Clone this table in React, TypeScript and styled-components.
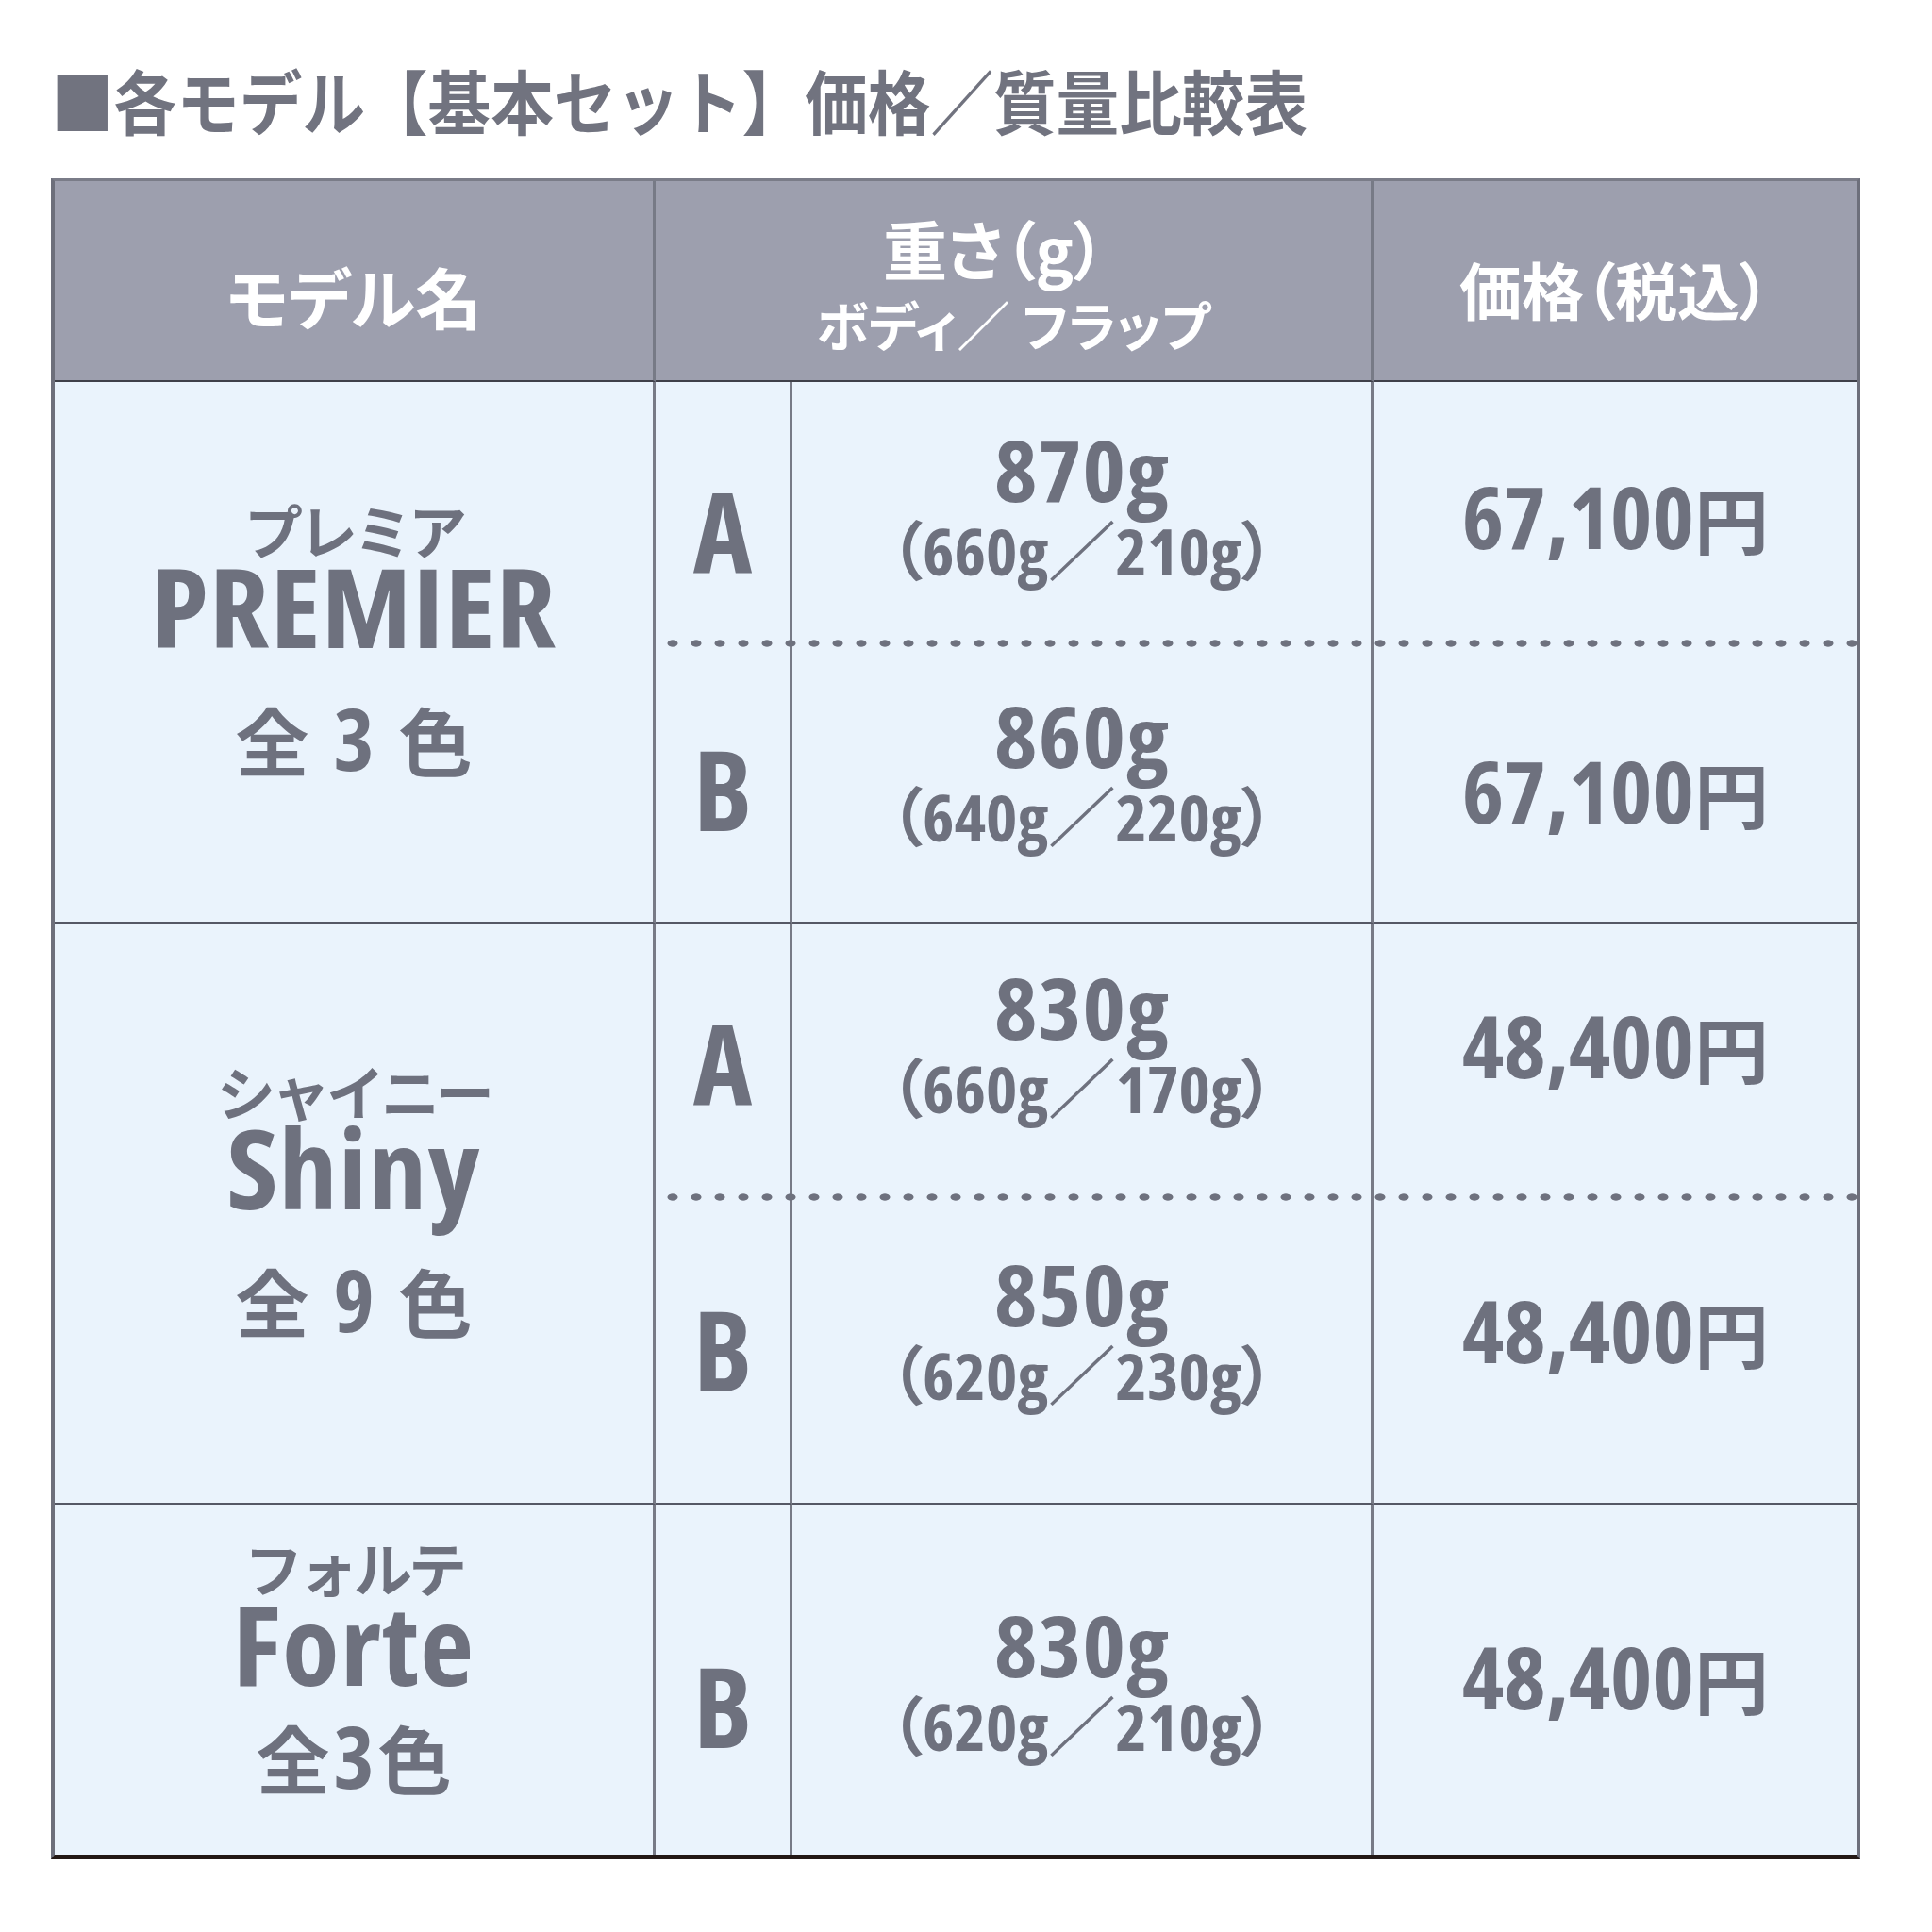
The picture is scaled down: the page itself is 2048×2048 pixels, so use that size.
import React from 'react';
import styled, { createGlobalStyle } from 'styled-components';

const ink = '#6e717e';
const headerBg = '#9d9fae';
const bodyBg = '#eaf3fc';
const colLine = '#777a86';
const groupLine = '#555865';

const latin = `"Open Sans", "Noto Sans CJK JP", sans-serif`;
const jp = `"Noto Sans CJK JP", sans-serif`;

type Variant = {
  letter: 'A' | 'B';
  weight: string;
  body: string;
  flap: string;
  price: string;
  // small vertical nudges (px) so each row sits where the printed table has it
  dy: { letter: number; weight: number; price: number };
};

type Model = {
  kana: string;
  name: string;
  count: string;
  spaced: boolean;
  variants: Variant[];
};

const models: Model[] = [
  {
    kana: 'プレミア',
    name: 'PREMIER',
    count: '3',
    spaced: true,
    variants: [
      {
        letter: 'A',
        weight: '870g',
        body: '660g',
        flap: '210g',
        price: '67,100',
        dy: { letter: 18, weight: -9, price: 4 },
      },
      {
        letter: 'B',
        weight: '860g',
        body: '640g',
        flap: '220g',
        price: '67,100',
        dy: { letter: 6, weight: -13, price: 9 },
      },
    ],
  },
  {
    kana: 'シャイニー',
    name: 'Shiny',
    count: '9',
    spaced: true,
    variants: [
      {
        letter: 'A',
        weight: '830g',
        body: '660g',
        flap: '170g',
        price: '48,400',
        dy: { letter: 2, weight: -19, price: -16 },
      },
      {
        letter: 'B',
        weight: '850g',
        body: '620g',
        flap: '230g',
        price: '48,400',
        dy: { letter: -1, weight: -22, price: -21 },
      },
    ],
  },
  {
    kana: 'フォルテ',
    name: 'Forte',
    count: '3',
    spaced: false,
    variants: [
      {
        letter: 'B',
        weight: '830g',
        body: '620g',
        flap: '210g',
        price: '48,400',
        dy: { letter: 27, weight: 0, price: -3 },
      },
    ],
  },
];

const GlobalStyle = createGlobalStyle`
  html, body {
    margin: 0;
    padding: 0;
    background: #ffffff;
  }
  body {
    width: 2048px;
    height: 2048px;
  }
`;

const Page = styled.div`
  box-sizing: border-box;
  width: 2048px;
  padding: 68px 0 0 54px;
`;

const Title = styled.h1`
  margin: 0 0 47px;
  font-family: ${jp};
  font-weight: 700;
  font-size: 74px;
  line-height: 1;
  color: #71737f;
  white-space: nowrap;
  transform: scaleX(0.9);
  transform-origin: left center;
`;

const Table = styled.div`
  display: grid;
  grid-template-columns: 637px 145px 616px 512px;
  grid-template-rows: 213px 277px 297px 290px 326px 371px;
  width: 1910px;
  background: ${bodyBg};
  border-left: 4px solid #6d6f7b;
  border-right: 4px solid #6d6f7b;
  border-top: 3px solid #7a7c88;
  border-bottom: 5px solid #231815;
`;

const HeaderCell = styled.div<{ $col: string; $last?: boolean }>`
  grid-row: 1;
  grid-column: ${(p) => p.$col};
  box-sizing: border-box;
  display: flex;
  flex-direction: column;
  align-items: center;
  justify-content: center;
  background: ${headerBg};
  border-right: ${(p) => (p.$last ? 'none' : `3px solid ${colLine}`)};
  border-bottom: 2px solid #3f4049;
  color: #ffffff;
  font-family: ${jp};
  font-weight: 700;
  font-feature-settings: 'palt';
`;

const HeadText = styled.div<{ $size: number; $top: number; $right?: number }>`
  margin-top: ${(p) => p.$top}px;
  margin-right: ${(p) => p.$right ?? 0}px;
  font-size: ${(p) => p.$size}px;
  line-height: 1;
  white-space: pre;
`;

const BodyCell = styled.div<{
  $row: string;
  $col: string;
  $divider?: boolean;
  $groupEnd?: boolean;
  $dy?: number;
}>`
  grid-row: ${(p) => p.$row};
  grid-column: ${(p) => p.$col};
  box-sizing: border-box;
  display: flex;
  flex-direction: column;
  align-items: center;
  justify-content: center;
  min-width: 0;
  padding-top: ${(p) => Math.max(0, 2 * (p.$dy ?? 0))}px;
  padding-bottom: ${(p) => Math.max(0, -2 * (p.$dy ?? 0))}px;
  border-right: ${(p) => (p.$divider ? `3px solid ${colLine}` : 'none')};
  border-bottom: ${(p) => (p.$groupEnd ? `2px solid ${groupLine}` : 'none')};
  color: ${ink};
  font-family: ${latin};
  font-weight: 700;
  font-stretch: 85%;
  font-feature-settings: 'palt';
`;

const Kana = styled.div`
  font-family: ${jp};
  font-size: 62px;
  line-height: 0.9;
  letter-spacing: -4px;
  font-feature-settings: normal;
`;

const ModelName = styled.div`
  margin-top: 6px;
  font-size: 116px;
  line-height: 0.8;
  letter-spacing: 1px;
  transform: scaleX(1.07);
`;

const ColorCount = styled.div<{ $tight: boolean }>`
  margin-top: ${(p) => (p.$tight ? 26 : 47)}px;
  display: flex;
  align-items: baseline;
  font-family: ${jp};
  font-size: 78px;
  line-height: 1;
`;

const CountDigit = styled.span<{ $spaced: boolean }>`
  font-family: ${latin};
  font-size: 92px;
  margin: 0 ${(p) => (p.$spaced ? 26 : 4)}px;
`;

const Letter = styled(BodyCell)`
  font-size: 118px;
  line-height: 1;
`;

const MainWeight = styled.div`
  font-size: 90px;
  line-height: 1;
  letter-spacing: 1px;
  transform: scaleX(1.08);
`;

const SubWeight = styled.div`
  margin-top: 8px;
  font-size: 68px;
  line-height: 1;
  white-space: nowrap;
  transform: scaleX(1.05);
`;

const Price = styled.div`
  display: flex;
  align-items: baseline;
  font-size: 91px;
  line-height: 1;
  transform: scaleX(1.04);
`;

const Yen = styled.span`
  font-family: ${jp};
  font-size: 76px;
`;

const DottedRule = styled.div<{ $row: number }>`
  grid-row: ${(p) => p.$row};
  grid-column: 2 / 5;
  align-self: end;
  z-index: 1;
  height: 8px;
  margin: 0 -6px -4px 12px;
  background-image: radial-gradient(
    6px 4px at 6px 4px,
    ${ink} 0,
    ${ink} 82%,
    transparent 100%
  );
  background-size: 25px 8px;
  background-repeat: repeat-x;
`;

const App = () => {
  let row = 2;

  const cells: React.ReactNode[] = [];
  models.forEach((model, mi) => {
    const lastGroup = mi === models.length - 1;
    const span = model.variants.length;
    cells.push(
      <BodyCell
        key={`m-${mi}`}
        $row={`${row} / span ${span}`}
        $col="1"
        $divider
        $groupEnd={!lastGroup}
        $dy={-10}
      >
        <Kana>{model.kana}</Kana>
        <ModelName>{model.name}</ModelName>
        <ColorCount $tight={!model.spaced}>
          全<CountDigit $spaced={model.spaced}>{model.count}</CountDigit>色
        </ColorCount>
      </BodyCell>,
    );

    model.variants.forEach((v, vi) => {
      const r = row + vi;
      const groupEnd = !lastGroup && vi === span - 1;
      cells.push(
        <Letter
          key={`l-${r}`}
          $row={`${r}`}
          $col="2"
          $divider
          $groupEnd={groupEnd}
          $dy={v.dy.letter}
        >
          {v.letter}
        </Letter>,
        <BodyCell
          key={`w-${r}`}
          $row={`${r}`}
          $col="3"
          $divider
          $groupEnd={groupEnd}
          $dy={v.dy.weight}
        >
          <MainWeight>{v.weight}</MainWeight>
          <SubWeight>
            （{v.body}／{v.flap}）
          </SubWeight>
        </BodyCell>,
        <BodyCell
          key={`p-${r}`}
          $row={`${r}`}
          $col="4"
          $groupEnd={groupEnd}
          $dy={v.dy.price}
        >
          <Price>
            {v.price}
            <Yen>円</Yen>
          </Price>
        </BodyCell>,
      );
      if (vi < span - 1) {
        cells.push(<DottedRule key={`d-${r}`} $row={r} />);
      }
    });

    row += span;
  });

  return (
    <>
      <GlobalStyle />
      <Page>
        <Title>■各モデル【基本セット】価格／質量比較表</Title>
        <Table>
          <HeaderCell $col="1">
            <HeadText $size={70} $top={32}>
              モデル名
            </HeadText>
          </HeaderCell>
          <HeaderCell $col="2 / 4">
            <HeadText $size={68} $top={4} $right={40}>
              重さ（g）
            </HeadText>
            <HeadText $size={56} $top={18}>
              ボディ／ フラップ
            </HeadText>
          </HeaderCell>
          <HeaderCell $col="4" $last>
            <HeadText $size={66} $top={14}>
              価格（税込）
            </HeadText>
          </HeaderCell>
          {cells}
        </Table>
      </Page>
    </>
  );
};

export default App;
